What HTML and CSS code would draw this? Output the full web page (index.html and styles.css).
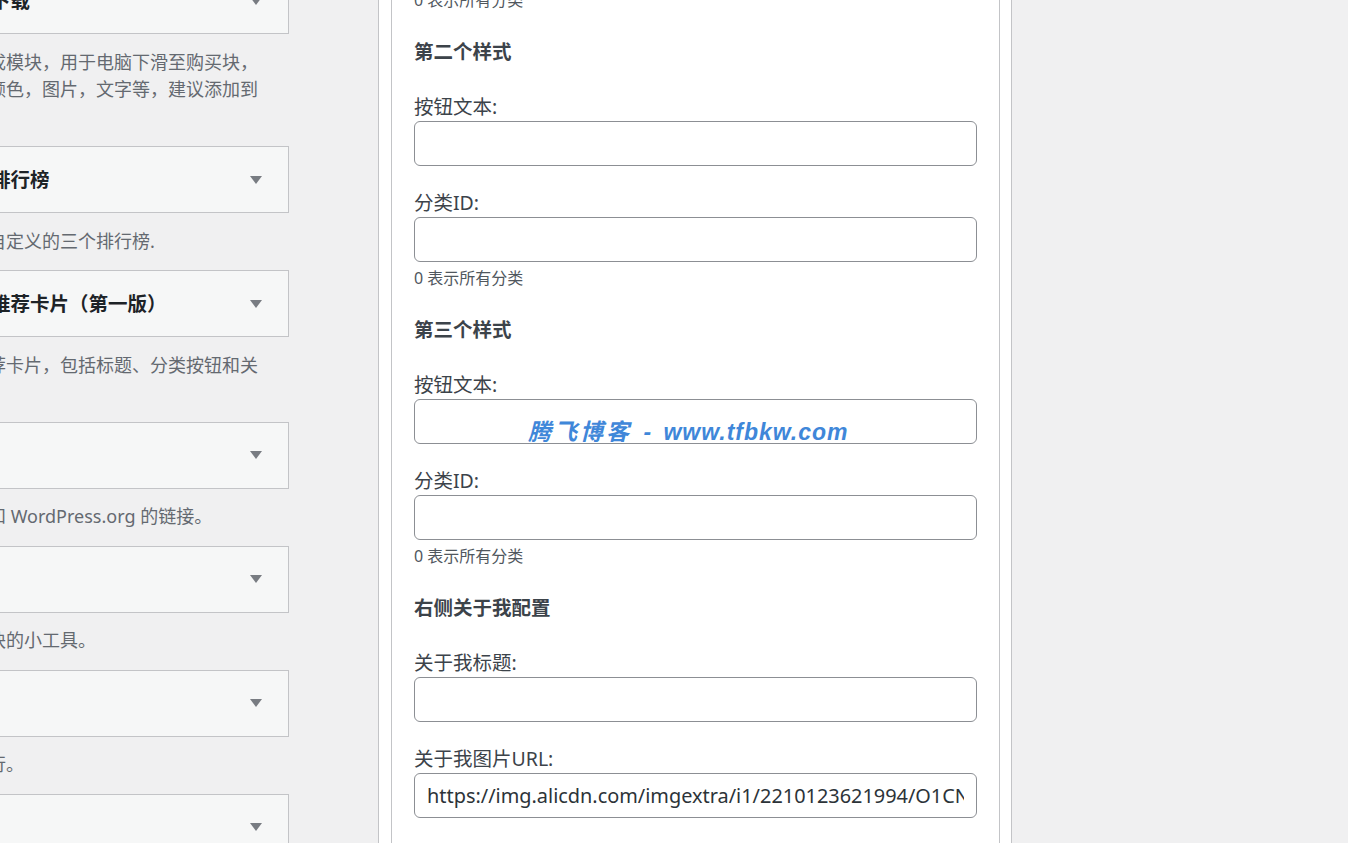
FILE: index.html
```html
<!DOCTYPE html>
<html lang="zh-CN">
<head>
<meta charset="utf-8">
<title>小工具</title>
<link rel="stylesheet" href="styles.css">
</head>
<body>
<div class="page">
  <div class="widgets">
    <div class="widget"><h3 class="widget-title">资源下载</h3><svg class="arrow" width="12" height="8" viewBox="0 0 12 8"><path d="M0 0H12L6 8Z"/></svg></div>
    <p class="widget-desc">此集成模块，用于电脑下滑至购买块，<br>设置颜色，图片，文字等，建议添加到<br>页脚</p>

    <div class="widget"><h3 class="widget-title">文章排行榜</h3><svg class="arrow" width="12" height="8" viewBox="0 0 12 8"><path d="M0 0H12L6 8Z"/></svg></div>
    <p class="widget-desc">显示自定义的三个排行榜.</p>

    <div class="widget"><h3 class="widget-title">文章推荐卡片（第一版）</h3><svg class="arrow" width="12" height="8" viewBox="0 0 12 8"><path d="M0 0H12L6 8Z"/></svg></div>
    <p class="widget-desc">新推荐卡片，包括标题、分类按钮和关<br>联。</p>

    <div class="widget"><h3 class="widget-title">功能</h3><svg class="arrow" width="12" height="8" viewBox="0 0 12 8"><path d="M0 0H12L6 8Z"/></svg></div>
    <p class="widget-desc">登录和 WordPress.org 的链接。</p>

    <div class="widget"><h3 class="widget-title">区块</h3><svg class="arrow" width="12" height="8" viewBox="0 0 12 8"><path d="M0 0H12L6 8Z"/></svg></div>
    <p class="widget-desc">含区块的小工具。</p>

    <div class="widget"><h3 class="widget-title">搜索</h3><svg class="arrow" width="12" height="8" viewBox="0 0 12 8"><path d="M0 0H12L6 8Z"/></svg></div>
    <p class="widget-desc">可执行。</p>

    <div class="widget"><h3 class="widget-title">日历</h3><svg class="arrow" width="12" height="8" viewBox="0 0 12 8"><path d="M0 0H12L6 8Z"/></svg></div>
    <p class="widget-desc">日历。</p>
  </div>

  <div class="panel">
    <div class="panel-inner">
      <p class="desc first">0 表示所有分类</p>

      <h4 class="section-title">第二个样式</h4>
      <p class="field"><label>按钮文本:</label><input type="text" class="text-input" value=""></p>
      <p class="field"><label>分类ID:</label><input type="text" class="text-input" value=""></p>
      <p class="desc">0 表示所有分类</p>

      <h4 class="section-title">第三个样式</h4>
      <p class="field"><label>按钮文本:</label><input type="text" class="text-input" value=""></p>
      <p class="field"><label>分类ID:</label><input type="text" class="text-input" value=""></p>
      <p class="desc">0 表示所有分类</p>

      <h4 class="section-title">右侧关于我配置</h4>
      <p class="field"><label>关于我标题:</label><input type="text" class="text-input" value=""></p>
      <p class="field"><label>关于我图片URL:</label><input type="text" class="text-input" value="https://img.alicdn.com/imgextra/i1/2210123621994/O1CN01a8xTQm1wR6Yp0PpSx_!!2210123621994.jpg"></p>

      <div class="watermark"><span class="wm-cn">腾飞博客</span><span class="wm-en"> - www.tfbkw.com</span></div>
    </div>
  </div>
</div>
</body>
</html>
```

FILE: styles.css
```css
html, body {
  margin: 0;
  padding: 0;
}

body {
  background: #f0f0f1;
  height: 843px;
  overflow: hidden;
  font-family: "Noto Sans", "Noto Sans CJK SC", sans-serif;
  color: #3c434a;
}

.page {
  display: flex;
  align-items: flex-start;
  gap: 89px;
  margin-left: -70px;
}

/* Left: available widgets list */
.widgets {
  flex: none;
  width: 359px;
  margin-top: -33px;
}

.widget {
  box-sizing: border-box;
  height: 67px;
  border: 1px solid #c3c4c7;
  background: #f6f7f7;
  display: flex;
  align-items: center;
  justify-content: space-between;
  padding: 0 26px 0 21px;
}

.widget-title {
  margin: 0;
  font-size: 19.5px;
  line-height: 1;
  font-weight: 700;
  color: #1d2327;
  white-space: nowrap;
}

.arrow {
  flex: none;
  fill: #787c82;
}

.widget-desc {
  margin: 14.5px 0 15px;
  padding-left: 22px;
  font-size: 18px;
  line-height: 27.5px;
  color: #646970;
  white-space: nowrap;
}

/* Right: widget form panel */
.panel {
  flex: none;
  box-sizing: border-box;
  width: 634px;
  height: 900px;
  margin-top: -14px;
  border: 1px solid #c3c4c7;
  background: #fff;
  padding: 0 11px 0 12px;
}

.panel-inner {
  position: relative;
  box-sizing: border-box;
  height: 100%;
  display: flex;
  flex-direction: column;
  border: 1px solid #c3c4c7;
  padding: 0 22px;
}

.desc {
  margin: 4px 0 0;
  font-size: 16px;
  line-height: 24px;
  color: #50575e;
}

.desc.first {
  margin-top: 0;
}

.section-title {
  margin: 25px 0 2px;
  font-size: 19.5px;
  line-height: 30px;
  font-weight: 700;
  color: #3c434a;
}

.field {
  margin: 23.5px 0 0;
}

.field label {
  display: block;
  font-size: 19.5px;
  line-height: 28px;
  color: #3c434a;
}

.text-input {
  display: block;
  box-sizing: border-box;
  width: 100%;
  height: 45px;
  margin: 0;
  padding: 0 12px;
  border: 1px solid #8c8f94;
  border-radius: 6px;
  background: #fff;
  font-family: "Noto Sans", "Noto Sans CJK SC", sans-serif;
  font-size: 19.9px;
  color: #2c3338;
}

.watermark {
  position: absolute;
  left: 136px;
  top: 427px;
  line-height: 30px;
  font-weight: 700;
  font-style: italic;
  color: #3f87d9;
  white-space: nowrap;
}

.wm-cn {
  font-family: "Noto Sans CJK SC", sans-serif;
  font-size: 23px;
  letter-spacing: 3px;
}

.wm-en {
  font-family: "Liberation Sans", sans-serif;
  font-size: 23px;
  letter-spacing: 1px;
  word-spacing: 4px;
}
```
